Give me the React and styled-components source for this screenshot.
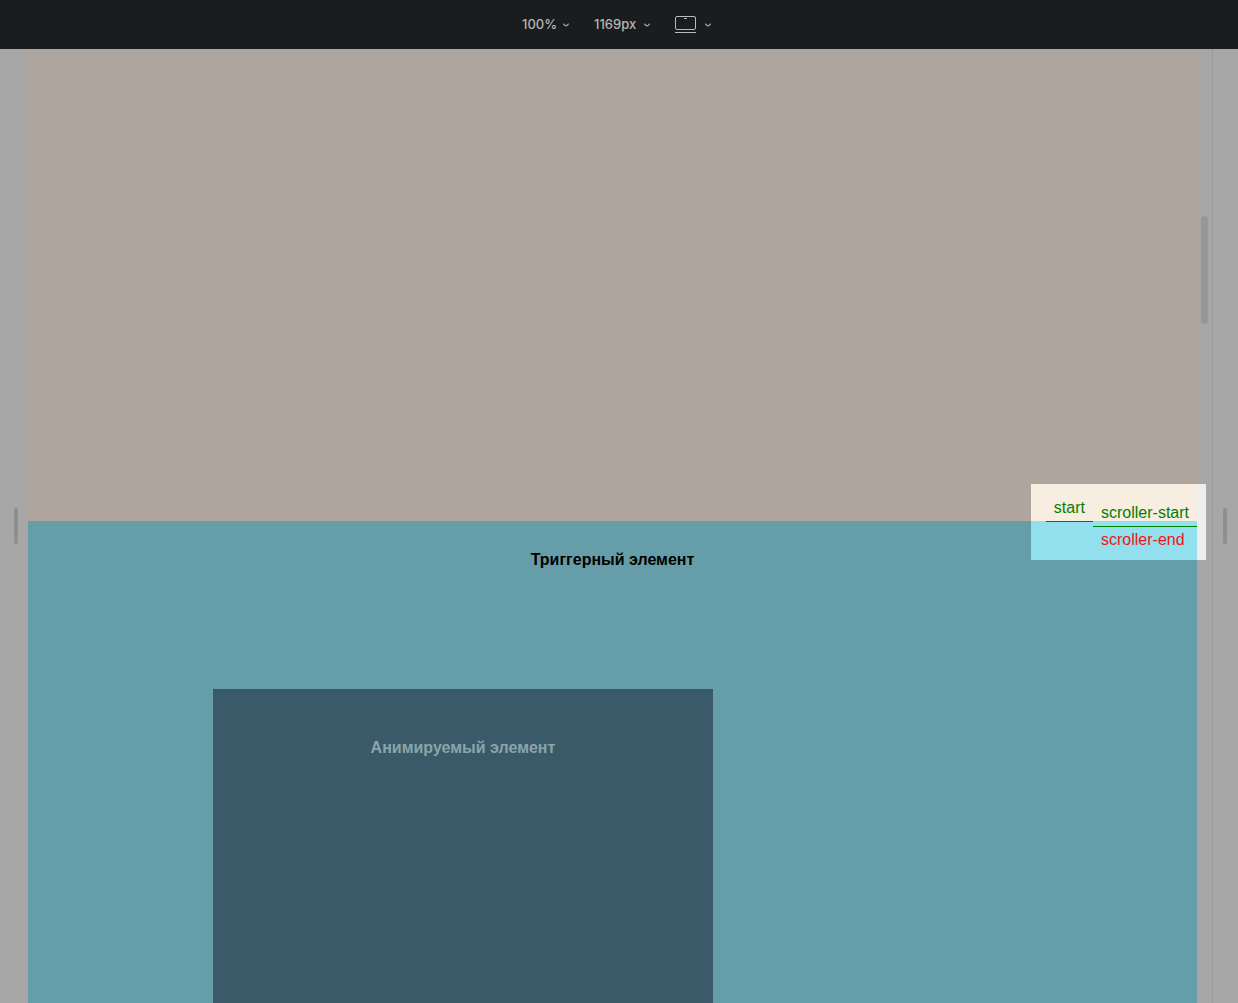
import styled, { createGlobalStyle } from "styled-components";

const App = () => {
  return (
    <>
      <GlobalStyle />
      <Page>
        <Toolbar>
          <Control>
            <Select $width={34} aria-label="Масштаб" defaultValue="100%">
              <option>100%</option>
            </Select>
            <Chevron />
          </Control>
          <Control>
            <Select $width={43} aria-label="Ширина" defaultValue="1169px">
              <option>1169px</option>
            </Select>
            <Chevron />
          </Control>
          <DeviceButton type="button" aria-label="Устройство" aria-haspopup="true">
            <DeviceIcon />
            <Chevron />
          </DeviceButton>
        </Toolbar>
        <Stage>
          <Gutter $side="left">
            <Handle />
          </Gutter>
          <Viewport>
            <Spacer />
            <Trigger>
              <TriggerTitle>Триггерный элемент</TriggerTitle>
              <Animated>
                <AnimatedTitle>Анимируемый элемент</AnimatedTitle>
              </Animated>
            </Trigger>
          </Viewport>
          <Scrollbar>
            <Thumb />
          </Scrollbar>
          <Gutter $side="right">
            <Handle />
          </Gutter>
          <Spotlight>
            <StartMarkers>
              <Marker $line>start</Marker>
            </StartMarkers>
            <ScrollerMarkers>
              <Marker $line>scroller-start</Marker>
              <Marker $end>scroller-end</Marker>
            </ScrollerMarkers>
          </Spotlight>
        </Stage>
      </Page>
    </>
  );
};

export default App;

const Chevron = () => (
  <svg width="8" height="8" viewBox="0 0 8 8" fill="none" stroke="#a4a5a7" strokeWidth="1.2">
    <path d="M1.2 2.8C2.2 3.4 3 4.8 4 4.8S5.8 3.4 6.8 2.8" />
  </svg>
);

const DeviceIcon = () => (
  <svg width="22" height="18" viewBox="0 0 22 18" fill="none" stroke="#b9babc">
    <rect x="0.5" y="0.5" width="20" height="13" rx="1.5" />
    <path d="M9 2.5h3M0 16.5h21" />
  </svg>
);

const GlobalStyle = createGlobalStyle`
  * {
    box-sizing: border-box;
  }

  body {
    margin: 0;
    background: #a7a7a7;
    font-family: "Liberation Sans", Arial, sans-serif;
    font-size: 16px;
    line-height: 18px;
  }
`;

const Page = styled.div`
  display: flex;
  flex-direction: column;
  height: 100vh;
  overflow: hidden;
`;

const Toolbar = styled.header`
  display: flex;
  flex-shrink: 0;
  align-items: center;
  justify-content: center;
  gap: 24px;
  height: 49px;
  padding-right: 4px;
  background: #1b1c1d;
`;

const Control = styled.div`
  display: flex;
  align-items: center;
  gap: 6px;
`;

const Select = styled.select`
  appearance: none;
  width: ${({ $width }) => $width}px;
  padding: 0 0 2px;
  border: none;
  background: transparent;
  color: #b4b5b7;
  font-family: Inter, sans-serif;
  font-size: 13px;
  font-weight: 500;
  line-height: 18px;
`;

const DeviceButton = styled.button`
  display: flex;
  align-items: center;
  gap: 7px;
  padding: 0;
  border: none;
  background: transparent;
`;

const Stage = styled.main`
  position: relative;
  display: flex;
  flex: 1;
  min-height: 0;
`;

const Gutter = styled.div`
  display: flex;
  align-items: center;
  justify-content: ${({ $side }) => ($side === "left" ? "flex-end" : "flex-start")};
  width: ${({ $side }) => ($side === "left" ? 28 : 26)}px;
  padding: 0 10px;
  border-left: ${({ $side }) => ($side === "right" ? "1px solid #999999" : "none")};
`;

const Handle = styled.div`
  width: 4px;
  height: 36px;
  border-radius: 2px;
  background: #8f8f90;
`;

const Viewport = styled.div`
  display: flex;
  flex: 1;
  flex-direction: column;
  overflow: hidden;
`;

const Spacer = styled.section`
  flex-shrink: 0;
  height: 472px;
  background: #ada59e;
`;

const Trigger = styled.section`
  display: flex;
  flex: 1 0 auto;
  flex-direction: column;
  padding-top: 30px;
  background: #659ea9;
`;

const TriggerTitle = styled.h2`
  margin: 0;
  color: #000;
  text-align: center;
  font-size: 16px;
  font-weight: 700;
  line-height: 18px;
`;

const Animated = styled.div`
  width: 500px;
  min-height: 500px;
  margin: 120px 0 0 185px;
  padding-top: 50px;
  background: #3b5a69;
`;

const AnimatedTitle = styled(TriggerTitle)`
  color: #89a5aa;
`;

const Scrollbar = styled.div`
  width: 15px;
  padding: 167px 4px 0;
`;

const Thumb = styled.div`
  height: 108px;
  border-radius: 4px;
  background: #979798;
`;

/* highlighted cut-out above the dimmed page, the strip on the right is the scrollbar */
const Spotlight = styled.div`
  position: absolute;
  top: 435px;
  right: 32px;
  display: flex;
  justify-content: flex-end;
  width: 175px;
  height: 76px;
  border-right: 9px solid #eeeeef;
  background: linear-gradient(#f8ede1 37px, #92dfee 37px);
`;

const StartMarkers = styled.div`
  padding-top: 11px;
`;

const ScrollerMarkers = styled.div`
  padding-top: 16px;
`;

const Marker = styled.div`
  padding: 4px 8px;
  border-bottom: ${({ $line }) => ($line ? "1px solid #008000" : "none")};
  color: ${({ $end }) => ($end ? "#f01414" : "#008000")};
`;
